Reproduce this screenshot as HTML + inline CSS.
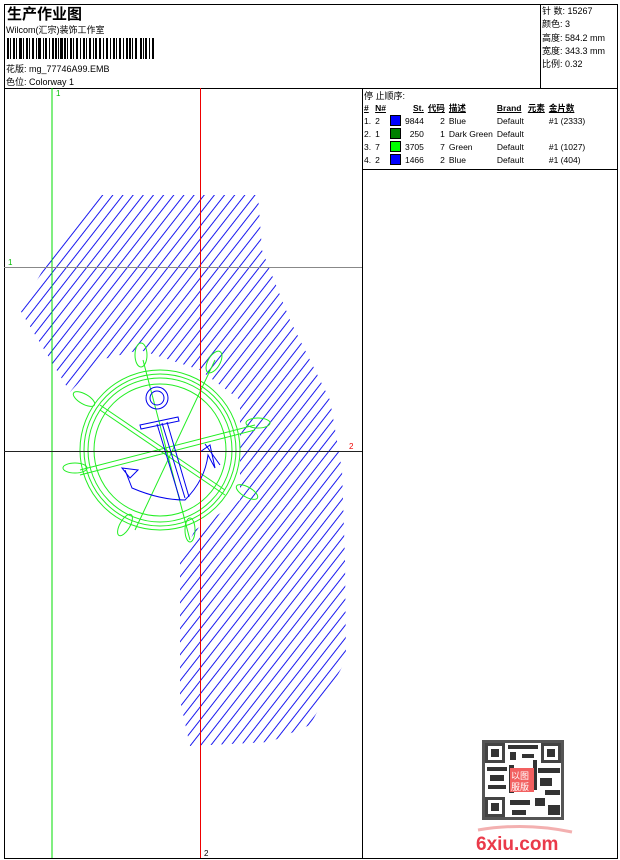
<!DOCTYPE html>
<html><head><meta charset="utf-8"><style>
body{margin:0;width:620px;height:860px;background:#fff;font-family:"Liberation Sans","Noto Sans CJK SC",sans-serif;font-size:9px;color:#000;position:relative;overflow:hidden}
.a{position:absolute;white-space:nowrap}
.b{position:absolute;border:0 solid #000}
table{border-collapse:collapse;font-size:8.5px}
td{padding:0 2px;height:13px;white-space:nowrap}
.sw{display:inline-block;width:9px;height:9px;border:1px solid #000;vertical-align:-2px}
</style></head><body>
<div class="b" style="left:4px;top:4px;width:612px;height:853px;border-width:1px"></div>
<div class="b" style="left:4px;top:88px;width:613px;border-top-width:1px"></div>
<div class="b" style="left:540px;top:4px;height:84px;border-left-width:1px"></div>
<div class="b" style="left:362px;top:88px;height:770px;border-left-width:1px"></div>
<div class="b" style="left:362px;top:169px;width:255px;border-top-width:1px"></div>
<div class="a" style="left:7px;top:3px;font-size:15px;font-weight:bold">生产作业图</div>
<div class="a" style="left:6px;top:23px">Wilcom(汇宗)装饰工作室</div>
<svg class="a" style="left:7px;top:38px" width="150" height="21">
<g fill="#000">
<rect x="0" y="0" width="2" height="21"/><rect x="3" y="0" width="1" height="21"/><rect x="6" y="0" width="2" height="21"/><rect x="9" y="0" width="1" height="21"/><rect x="12" y="0" width="3" height="21"/><rect x="16" y="0" width="1" height="21"/><rect x="19" y="0" width="2" height="21"/><rect x="22" y="0" width="1" height="21"/><rect x="25" y="0" width="2" height="21"/><rect x="29" y="0" width="1" height="21"/><rect x="31" y="0" width="3" height="21"/><rect x="36" y="0" width="1" height="21"/><rect x="38" y="0" width="2" height="21"/><rect x="42" y="0" width="1" height="21"/><rect x="45" y="0" width="2" height="21"/><rect x="48" y="0" width="2" height="21"/><rect x="51" y="0" width="1" height="21"/><rect x="53" y="0" width="3" height="21"/><rect x="57" y="0" width="2" height="21"/><rect x="60" y="0" width="1" height="21"/><rect x="63" y="0" width="2" height="21"/><rect x="66" y="0" width="1" height="21"/><rect x="69" y="0" width="2" height="21"/><rect x="73" y="0" width="1" height="21"/><rect x="76" y="0" width="2" height="21"/><rect x="79" y="0" width="1" height="21"/><rect x="82" y="0" width="2" height="21"/><rect x="86" y="0" width="1" height="21"/><rect x="88" y="0" width="2" height="21"/><rect x="92" y="0" width="2" height="21"/><rect x="96" y="0" width="1" height="21"/><rect x="99" y="0" width="2" height="21"/><rect x="103" y="0" width="1" height="21"/><rect x="106" y="0" width="2" height="21"/><rect x="109" y="0" width="1" height="21"/><rect x="112" y="0" width="2" height="21"/><rect x="116" y="0" width="1" height="21"/><rect x="119" y="0" width="2" height="21"/><rect x="122" y="0" width="2" height="21"/><rect x="125" y="0" width="1" height="21"/><rect x="128" y="0" width="2" height="21"/><rect x="133" y="0" width="2" height="21"/><rect x="136" y="0" width="1" height="21"/><rect x="138" y="0" width="2" height="21"/><rect x="142" y="0" width="1" height="21"/><rect x="145" y="0" width="2" height="21"/>
</g></svg>
<div class="a" style="left:6px;top:62px">花版: mg_77746A99.EMB</div>
<div class="a" style="left:6px;top:75px">色位: Colorway 1</div>
<div class="a" style="left:542px;top:5px;line-height:13.3px">针 数: 15267<br>颜色: 3<br>高度: 584.2 mm<br>宽度: 343.3 mm<br>比例: 0.32</div>
<div class="a" style="left:364px;top:89px">停 止顺序:</div>
<table class="a" style="left:362px;top:101px">
<tr style="font-weight:bold;text-decoration:underline"><td>#</td><td>N#</td><td></td><td style="text-align:right">St.</td><td>代码</td><td style="width:44px">描述</td><td>Brand</td><td>元素</td><td>金片数</td></tr>
<tr><td>1.</td><td>2</td><td><span class="sw" style="background:#0000ff"></span></td><td style="text-align:right">9844</td><td style="text-align:right">2</td><td>Blue</td><td>Default</td><td></td><td>#1 (2333)</td></tr>
<tr><td>2.</td><td>1</td><td><span class="sw" style="background:#008000"></span></td><td style="text-align:right">250</td><td style="text-align:right">1</td><td>Dark Green</td><td>Default</td><td></td><td></td></tr>
<tr><td>3.</td><td>7</td><td><span class="sw" style="background:#00ff00"></span></td><td style="text-align:right">3705</td><td style="text-align:right">7</td><td>Green</td><td>Default</td><td></td><td>#1 (1027)</td></tr>
<tr><td>4.</td><td>2</td><td><span class="sw" style="background:#0000ff"></span></td><td style="text-align:right">1466</td><td style="text-align:right">2</td><td>Blue</td><td>Default</td><td></td><td>#1 (404)</td></tr>
</table>
<svg class="a" style="left:0;top:0" width="620" height="860">
<defs>
<pattern id="h" width="8" height="60" patternUnits="userSpaceOnUse" patternTransform="rotate(38)">
<line x1="1" y1="0" x2="1" y2="60" stroke="#0000ee" stroke-width="0.9"/>
</pattern>
</defs>
<path d="M100,195 L258,195 L262,250 L290,320 L330,400 L342,470 L345,560 L346,660 L310,725 L270,742 L190,746 L180,700 L180,560 L195,530 L240,500 L240,400 L200,370 L140,350 L100,360 L70,392 L20,310 L60,240 Z" fill="url(#h)"/>
<g fill="none" stroke="#22ee22" stroke-width="1">
<circle cx="160" cy="450" r="80"/><circle cx="160" cy="450" r="76"/><circle cx="160" cy="450" r="72"/><circle cx="160" cy="450" r="66"/>
<line x1="100" y1="405" x2="225" y2="490"/><line x1="100" y1="410" x2="225" y2="495"/>
<line x1="80" y1="470" x2="255" y2="425"/><line x1="80" y1="475" x2="255" y2="430"/>
<line x1="143" y1="360" x2="190" y2="540"/><line x1="215" y1="360" x2="135" y2="530"/>
<ellipse cx="141" cy="355" rx="6" ry="12"/><ellipse cx="214" cy="362" rx="6" ry="12" transform="rotate(30 214 362)"/>
<ellipse cx="258" cy="423" rx="12" ry="5"/><ellipse cx="247" cy="492" rx="12" ry="5" transform="rotate(30 247 492)"/>
<ellipse cx="190" cy="530" rx="5" ry="12"/><ellipse cx="125" cy="525" rx="5" ry="12" transform="rotate(30 125 525)"/>
<ellipse cx="75" cy="468" rx="12" ry="5"/><ellipse cx="84" cy="399" rx="12" ry="5" transform="rotate(30 84 399)"/>
</g>
<g fill="none" stroke="#0000ee" stroke-width="1">
<circle cx="157" cy="398" r="11"/><circle cx="157" cy="398" r="7"/>
<path d="M140,425 L178,417 L179,421 L141,429 Z"/>
<path d="M157,424 L180,500 M162,423 L185,498 M167,422 L189,497"/>
<path d="M125,470 L132,488 Q160,500 185,500 Q205,480 208,455 L215,468 L210,445 L200,452"/>
<path d="M122,468 L138,470 L130,478 Z M205,444 L220,465"/>
</g>
<line x1="52" y1="88" x2="52" y2="858" stroke="#00dd00"/>
<line x1="200.5" y1="88" x2="200.5" y2="858" stroke="#ee0000"/>
<line x1="4" y1="267.5" x2="362" y2="267.5" stroke="#888"/>
<line x1="4" y1="451.5" x2="362" y2="451.5" stroke="#222"/>
<text x="56" y="96" fill="#00bb00" font-size="8" font-family="Liberation Sans">1</text>
<text x="8" y="265" fill="#00bb00" font-size="8" font-family="Liberation Sans">1</text>
<text x="349" y="449" fill="#ee0000" font-size="8" font-family="Liberation Sans">2</text>
<text x="204" y="856" fill="#000" font-size="8" font-family="Liberation Sans">2</text>
<g fill="#333">
<rect x="482" y="740" width="82" height="80" fill="#555"/>
<rect x="485" y="743" width="76" height="74" fill="#fff"/>
<rect x="485" y="743" width="20" height="20" fill="#444"/><rect x="488" y="746" width="14" height="14" fill="#fff"/><rect x="491" y="749" width="8" height="8"/>
<rect x="541" y="743" width="20" height="20" fill="#444"/><rect x="544" y="746" width="14" height="14" fill="#fff"/><rect x="547" y="749" width="8" height="8"/>
<rect x="485" y="797" width="20" height="20" fill="#444"/><rect x="488" y="800" width="14" height="14" fill="#fff"/><rect x="491" y="803" width="8" height="8"/>
<rect x="508" y="745" width="30" height="4"/><rect x="510" y="752" width="6" height="8"/><rect x="522" y="754" width="12" height="4"/>
<rect x="487" y="767" width="20" height="4"/><rect x="490" y="775" width="14" height="6"/><rect x="488" y="785" width="18" height="4"/>
<rect x="538" y="768" width="22" height="5"/><rect x="540" y="778" width="12" height="8"/><rect x="545" y="790" width="15" height="5"/>
<rect x="510" y="800" width="20" height="5"/><rect x="535" y="798" width="10" height="8"/><rect x="548" y="805" width="12" height="10"/><rect x="512" y="810" width="14" height="5"/>
<rect x="509" y="765" width="5" height="28"/><rect x="533" y="760" width="4" height="30"/>
</g>
<rect x="510" y="768" width="24" height="24" fill="#f26060"/>
<text x="511" y="779" fill="#fff" font-size="9" font-family="Noto Sans CJK SC">以图</text>
<text x="511" y="790" fill="#fff" font-size="9" font-family="Noto Sans CJK SC">服版</text>
<path d="M478,830 Q525,822 572,832" stroke="#f3b0b0" stroke-width="3" fill="none"/>
<text x="476" y="850" fill="#ea3a4a" font-size="19" font-weight="bold" font-family="Liberation Sans">6xiu.com</text>
</svg>
</body></html>
